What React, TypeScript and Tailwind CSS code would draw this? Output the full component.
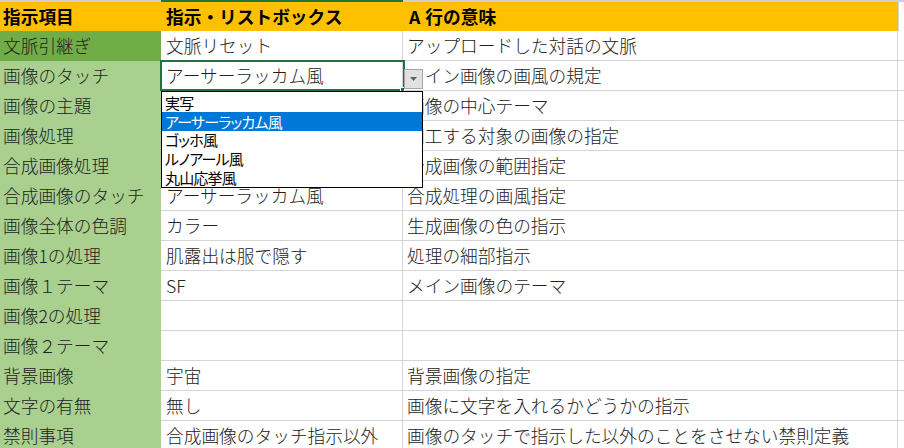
import React from "react";

type Row = { a: string; b: string; c: string };

const rows: Row[] = [
  { a: "文脈引継ぎ", b: "文脈リセット", c: "アップロードした対話の文脈" },
  { a: "画像のタッチ", b: "アーサーラッカム風", c: "メイン画像の画風の規定" },
  { a: "画像の主題", b: "", c: "画像の中心テーマ" },
  { a: "画像処理", b: "", c: "加工する対象の画像の指定" },
  { a: "合成画像処理", b: "", c: "合成画像の範囲指定" },
  { a: "合成画像のタッチ", b: "アーサーラッカム風", c: "合成処理の画風指定" },
  { a: "画像全体の色調", b: "カラー", c: "生成画像の色の指示" },
  { a: "画像1の処理", b: "肌露出は服で隠す", c: "処理の細部指示" },
  { a: "画像１テーマ", b: "SF", c: "メイン画像のテーマ" },
  { a: "画像2の処理", b: "", c: "" },
  { a: "画像２テーマ", b: "", c: "" },
  { a: "背景画像", b: "宇宙", c: "背景画像の指定" },
  { a: "文字の有無", b: "無し", c: "画像に文字を入れるかどうかの指示" },
  { a: "禁則事項", b: "合成画像のタッチ指示以外", c: "画像のタッチで指示した以外のことをさせない禁則定義" },
];

const options = ["実写", "アーサーラッカム風", "ゴッホ風", "ルノアール風", "丸山応挙風"];

const font = { fontFamily: '"Noto Sans CJK JP", "Noto Sans", sans-serif' };

export default function App() {
  return (
    <div className="relative w-[904px] h-[448px] overflow-hidden bg-white text-[#222222]" style={font}>
      {/* column header edge with the active column marked */}
      <div className="flex h-[2px]">
        <div className="w-[161px] bg-[#d0d0d0]" />
        <div className="w-[242px] bg-[#217346]" />
        <div className="flex-1 bg-[#d0d0d0]" />
      </div>

      {/* header row */}
      <div className="flex h-[29px]">
        <div className="w-[898px] flex bg-[#ffc000] font-bold text-[17.7px] leading-none text-black">
          <div className="w-[161px] pl-[3px] flex items-center">指示項目</div>
          <div className="w-[242px] pl-[5px] flex items-center">指示・リストボックス</div>
          <div className="flex-1 pl-[6px] flex items-center">
            <span className="mr-[5px]">A</span>行の意味
          </div>
        </div>
        <div className="w-px bg-[#d4d4d4]" />
        <div className="flex-1" />
      </div>

      {/* data rows */}
      {rows.map((r, i) => (
        <div key={i} className="flex h-[30px] text-[17.7px] leading-none font-light">
          <div
            className={`w-[161px] pl-[3px] flex items-center whitespace-nowrap ${
              i === 0 ? "bg-[#70ad47]" : "bg-[#a9d08e]"
            }`}
          >
            {r.a}
          </div>
          <div className="w-[242px] pl-[5px] flex items-center border-r border-b border-[#d4d4d4] whitespace-nowrap">
            {r.b}
          </div>
          <div className="w-[495px] pl-[4px] flex items-center border-r border-b border-[#d4d4d4] whitespace-nowrap">
            {r.c}
          </div>
          <div className="flex-1 border-b border-[#d4d4d4]" />
        </div>
      ))}

      {/* active cell outline */}
      <div className="absolute left-[160px] top-[60px] w-[245px] h-[31px] border-2 border-[#217346]" />
      <div className="absolute left-[400px] top-[87px] w-[5px] h-[5px] bg-[#217346] border border-white" />

      {/* list validation button */}
      <div className="absolute left-[404px] top-[69px] w-[19px] h-[20px] bg-[#e1e1e1] border border-[#a6a6a6] flex items-center justify-center">
        <svg width="7" height="4" viewBox="0 0 7 4">
          <path d="M0 0 H7 L3.5 4 Z" fill="#606060" />
        </svg>
      </div>

      {/* open dropdown list */}
      <div className="absolute left-[161px] top-[91px] w-[262px] h-[97px] bg-white border border-black pt-[1px]">
        {options.map((o, i) => (
          <div
            key={o}
            className={`h-[18.8px] pl-[3px] flex items-center text-[15px] leading-none tracking-[-0.8px] whitespace-nowrap ${
              i === 1 ? "bg-[#0078d7] text-white" : "text-black"
            }`}
            style={{ fontFeatureSettings: '"palt"' }}
          >
            {o}
          </div>
        ))}
      </div>
    </div>
  );
}
